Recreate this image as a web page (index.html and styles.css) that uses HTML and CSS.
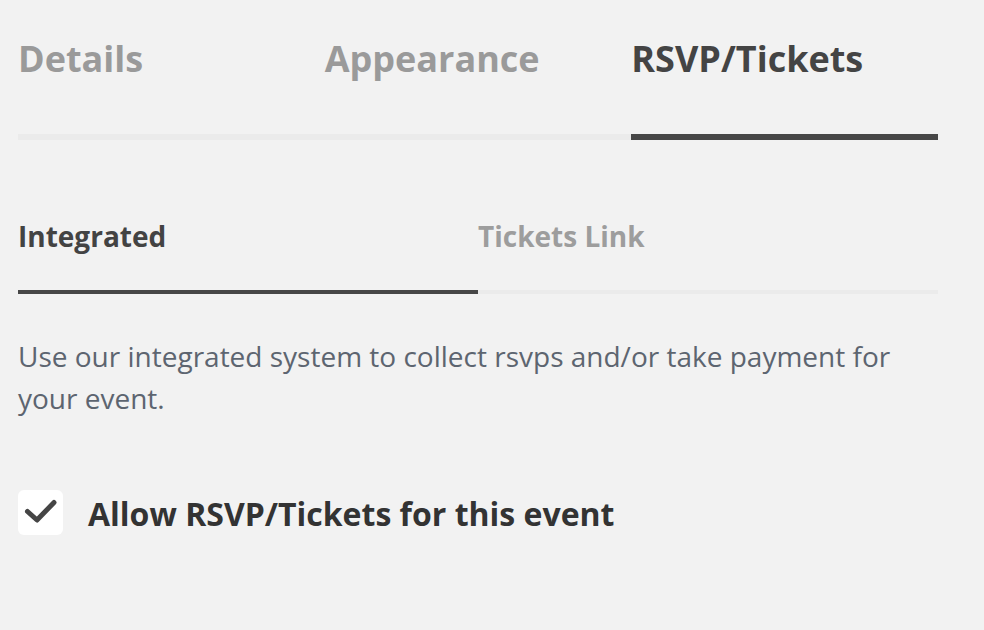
FILE: index.html
```html
<!DOCTYPE html>
<html lang="en">
<head>
  <meta charset="UTF-8" />
  <meta name="viewport" content="width=device-width, initial-scale=1.0" />
  <title>Event RSVP/Tickets</title>
  <link rel="stylesheet" href="styles.css">
</head>
<body>
  <div class="painel">
    <div class="abas">
      <div class="aba">Details</div>
      <div class="aba">Appearance</div>
      <div class="aba ativa">RSVP/Tickets</div>
    </div>

    <div class="subabas">
      <div class="subaba ativa">Integrated</div>
      <div class="subaba">Tickets Link</div>
    </div>

    <p class="descricao">Use our integrated system to collect rsvps and/or take payment for your event.</p>

    <label class="opcao">
      <span class="caixa">
        <svg width="45" height="45" viewBox="0 0 45 45">
          <path d="M9.5 21.5 L19 30 L36 12.5" fill="none" stroke="#454545" stroke-width="5" stroke-linecap="round" stroke-linejoin="round" />
        </svg>
      </span>
      <span class="opcao-texto">Allow RSVP/Tickets for this event</span>
    </label>
  </div>
</body>
</html>
```

FILE: styles.css
```css
body {
  margin: 0;
  background-color: #f2f2f2;
  font-family: "Open Sans", sans-serif;
}

.painel {
  width: 920px;
  margin-left: 18px;
}

.abas {
  display: grid;
  grid-template-columns: repeat(3, 1fr);
}

.aba {
  padding: 34px 0 51px;
  font-size: 36px;
  line-height: 49px;
  font-weight: 700;
  color: #9a9a9a;
  border-bottom: 6px solid #ebebeb;
}

.aba.ativa {
  color: #444;
  border-bottom-color: #474747;
}

.subabas {
  display: grid;
  grid-template-columns: repeat(2, 1fr);
  margin-top: 77px;
}

.subaba {
  padding-bottom: 35px;
  font-size: 28px;
  line-height: 38px;
  font-weight: 700;
  color: #9d9d9d;
  border-bottom: 4px solid #ebebeb;
}

.subaba.ativa {
  color: #434343;
  border-bottom-color: #474747;
}

.descricao {
  margin: 41px 0 0;
  font-size: 28px;
  line-height: 42px;
  color: #5d6570;
}

.opcao {
  display: flex;
  align-items: center;
  gap: 25px;
  margin-top: 71px;
}

.caixa {
  width: 45px;
  height: 45px;
  background-color: #fff;
  border-radius: 6px;
  display: flex;
}

.opcao-texto {
  font-size: 32px;
  font-weight: 700;
  color: #333;
  padding-top: 1px;
}
```
